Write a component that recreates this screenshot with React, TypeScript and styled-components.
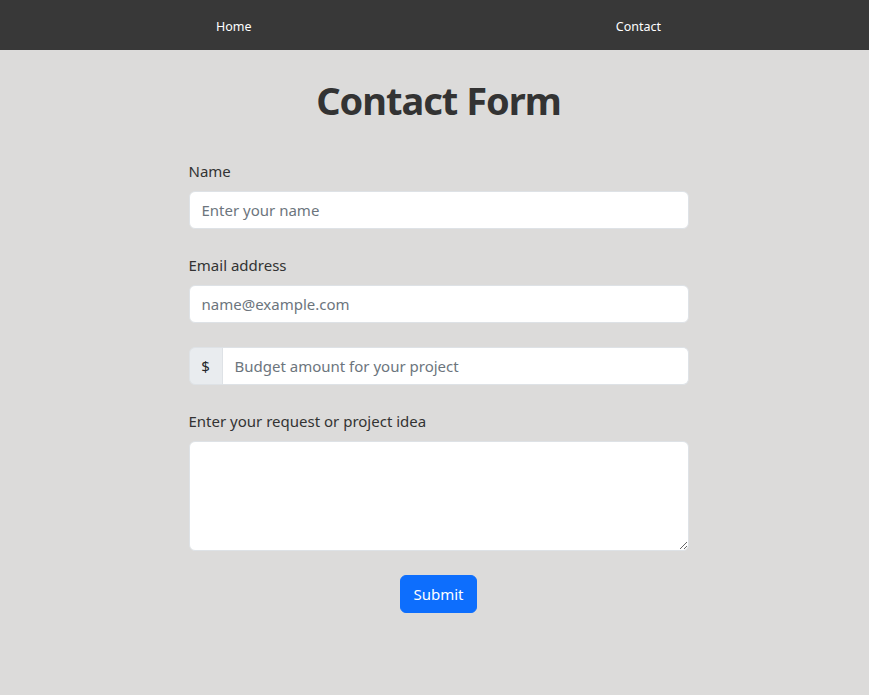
import React from "react";
import styled, { createGlobalStyle } from "styled-components";

const Global = createGlobalStyle`
  html, body { margin: 0; padding: 0; }
  body {
    background: #dcdbda;
    font-family: "Noto Sans", "Liberation Sans", sans-serif;
    color: #333;
  }
  * { box-sizing: border-box; }
`;

const NavBar = styled.nav`
  height: 50px;
  background: #383838;
  display: flex;
  align-items: center;
  justify-content: center;
`;

const NavList = styled.ul`
  list-style: none;
  margin: 0 0 1px 8px;
  padding: 0;
  width: 445px;
  display: flex;
  justify-content: space-between;
`;

const NavLink = styled.a`
  color: #fff;
  font-size: 12.5px;
  text-decoration: none;
`;

const Main = styled.main`
  display: flex;
  flex-direction: column;
  align-items: center;
  padding-left: 8px;
`;

const Title = styled.h1`
  margin: 26px 0 35px;
  font-size: 38px;
  letter-spacing: -1px;
  line-height: 48px;
  font-weight: 700;
  color: #333;
`;

const Form = styled.form`
  width: 500px;
  display: flex;
  flex-direction: column;
  gap: 24px;
`;

const Field = styled.div`
  display: flex;
  flex-direction: column;
`;

const Label = styled.label`
  font-size: 15px;
  line-height: 24px;
  margin-bottom: 8px;
  color: #333;
`;

const Input = styled.input`
  height: 38px;
  padding: 6px 12px;
  font-size: 15px;
  font-family: inherit;
  border: 1px solid #dee2e6;
  border-radius: 6px;
  background: #fff;
  color: #212529;
  width: 100%;
  &::placeholder { color: #6c757d; }
`;

const Group = styled.div`
  display: flex;
  height: 38px;
`;

const Addon = styled.span`
  width: 34px;
  display: flex;
  align-items: center;
  justify-content: center;
  background: #e9ecef;
  border: 1px solid #dee2e6;
  border-radius: 6px 0 0 6px;
  font-size: 15px;
  color: #212529;
`;

const GroupInput = styled(Input)`
  border-left: none;
  border-radius: 0 6px 6px 0;
  flex: 1;
`;

const TextArea = styled.textarea`
  height: 110px;
  padding: 6px 12px;
  font-size: 15px;
  font-family: inherit;
  border: 1px solid #dee2e6;
  border-radius: 6px;
  background: #fff;
  resize: vertical;
`;

const Actions = styled.div`
  display: flex;
  justify-content: center;
`;

const Button = styled.button`
  height: 38px;
  width: 77px;
  padding: 0;
  font-size: 15px;
  font-family: inherit;
  color: #fff;
  background: #0d6efd;
  border: 1px solid #0d6efd;
  border-radius: 6px;
  cursor: pointer;
`;

export default function App() {
  return (
    <>
      <Global />
      <NavBar>
        <NavList>
          <li><NavLink href="#">Home</NavLink></li>
          <li><NavLink href="#">Contact</NavLink></li>
        </NavList>
      </NavBar>
      <Main>
        <Title>Contact Form</Title>
        <Form onSubmit={(e) => e.preventDefault()}>
          <Field>
            <Label>Name</Label>
            <Input placeholder="Enter your name" />
          </Field>
          <Field>
            <Label>Email address</Label>
            <Input placeholder="name@example.com" />
          </Field>
          <Group>
            <Addon>$</Addon>
            <GroupInput placeholder="Budget amount for your project" />
          </Group>
          <Field>
            <Label>Enter your request or project idea</Label>
            <TextArea />
          </Field>
          <Actions>
            <Button type="submit">Submit</Button>
          </Actions>
        </Form>
      </Main>
    </>
  );
}
